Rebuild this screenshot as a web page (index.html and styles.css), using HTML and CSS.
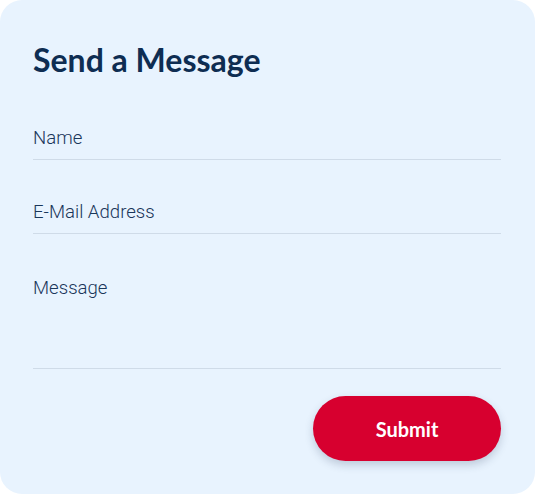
FILE: index.html
```html
<!DOCTYPE html>
<html lang="en">
<head>
    <meta charset="UTF-8">
    <meta name="viewport" content="width=device-width, initial-scale=1.0">
    <title>Send a Message</title>
    <link rel="stylesheet" href="styles.css">
</head>
<body>
    <main class="card">
        <h1 class="card-title">Send a Message</h1>
        <form class="contact-form">
            <input class="field" type="text" placeholder="Name">
            <input class="field" type="email" placeholder="E-Mail Address">
            <textarea class="field field-message" placeholder="Message"></textarea>
            <div class="actions">
                <button class="submit" type="button">Submit</button>
            </div>
        </form>
    </main>
</body>
</html>
```

FILE: styles.css
```css
/* contact card */
html, body {
    margin: 0;
    padding: 0;
    background: #fff;
}
.card {
    box-sizing: border-box;
    width: 535px;
    height: 494px;
    background-color: #e8f3fe;
    border-radius: 22px;
    padding: 40px 34px 0 33px;
}
.card-title {
    font-family: Lato, "Open Sans", sans-serif;
    font-weight: 700;
    font-size: 32px;
    line-height: 40px;
    color: #0e2d52;
    margin: 0 0 40px;
}
.contact-form {
    display: flex;
    flex-direction: column;
}
.field {
    font-family: Roboto, "Noto Sans", sans-serif;
    font-weight: 300;
    font-size: 18.6px;
    color: #1a365a;
    background: transparent;
    border: none;
    border-bottom: 1.5px solid #cfdbe8;
    outline: none;
    padding: 0 0 4px;
    height: 40px;
    margin-bottom: 34px;
    box-sizing: border-box;
}
.field::placeholder {
    color: #1a365a;
    opacity: 1;
}
.field-message {
    resize: none;
    height: 101px;
    padding-top: 9px;
    margin-bottom: 27px;
}
.actions {
    display: flex;
    justify-content: flex-end;
}
.submit {
    width: 188px;
    height: 65px;
    border: none;
    border-radius: 33px;
    background-color: #d7002f;
    color: #fff;
    font-family: Lato, "Open Sans", sans-serif;
    font-weight: 700;
    font-size: 20px;
    box-shadow: 0 4px 8px rgba(40, 60, 90, 0.22);
    cursor: pointer;
}
```
